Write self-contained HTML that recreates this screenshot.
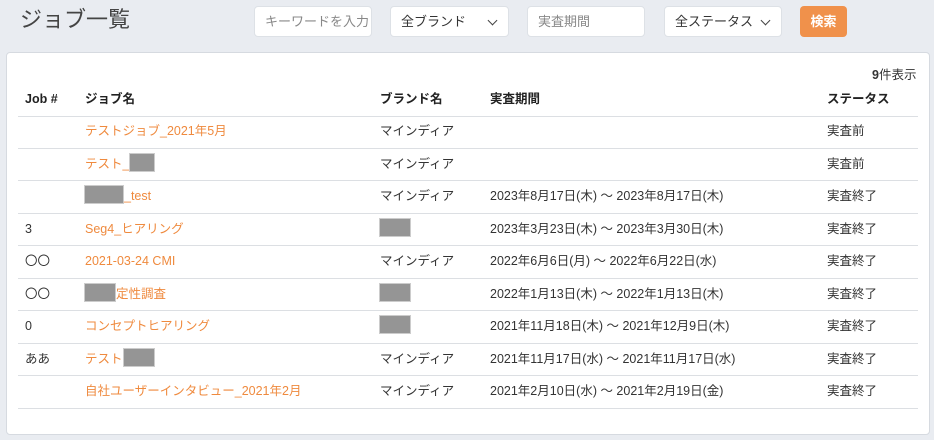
<!DOCTYPE html>
<html><head><meta charset="utf-8"><style>
*{box-sizing:border-box;margin:0;padding:0}
body{width:934px;height:440px;background:#e9ecf1;font-family:"Liberation Sans","Noto Sans CJK JP",sans-serif;color:#333;position:relative;overflow:hidden;font-size:12.5px}
.abs{position:absolute}
h1{position:absolute;left:20px;top:5px;font-size:22px;line-height:30px;font-weight:normal;color:#444}
.inp{position:absolute;top:6px;height:31px;background:#fff;border:1px solid #dde1e6;border-radius:4px;font-size:13px;line-height:29px;color:#888;padding:0 10px;white-space:nowrap;overflow:hidden}
.sel{color:#333}
.chev{position:absolute;right:12px;top:10px;width:7px;height:7px;border-right:1.5px solid #444;border-bottom:1.5px solid #444;transform:rotate(45deg)}
.btn{position:absolute;left:800px;top:6px;width:47px;height:31px;background:#f0914b;border-radius:4px;color:#fff;font-size:13px;font-weight:bold;text-align:center;line-height:31px}
.card{position:absolute;left:6px;top:52px;width:924px;height:383px;background:#fff;border:1px solid #d6dae0;border-radius:4px}
.row{position:absolute;left:18px;width:900px;border-bottom:1px solid #dcdfe3;height:32.5px}
.row span{position:absolute;top:0;line-height:31px;height:31px;white-space:nowrap}
.o{color:#ef8a3e}
.r{display:inline-block;background:#959595;height:19px;vertical-align:-4px;border:1px solid #ccc}
.h span{font-weight:bold;color:#222}
</style></head><body>
<h1>ジョブ一覧</h1>
<div class="inp" style="left:254px;width:118px">キーワードを入力</div>
<div class="inp sel" style="left:390px;width:119px">全ブランド<div class="chev"></div></div>
<div class="inp" style="left:527px;width:118px">実査期間</div>
<div class="inp sel" style="left:664px;width:118px">全ステータス<div class="chev"></div></div>
<div class="btn">検索</div>
<div class="card"></div>
<div class="abs" style="left:872px;top:66px;line-height:18px;font-size:12.5px;color:#333"><b>9</b>件表示</div>
<div class="row h" style="top:84px;height:33px"><span style="left:7px">Job #</span><span style="left:67px">ジョブ名</span><span style="left:362px">ブランド名</span><span style="left:472px">実査期間</span><span style="left:809px">ステータス</span></div>
<div class="row" style="top:116px"><span class="o" style="left:67px">テストジョブ_2021年5月</span><span style="left:362px">マインディア</span><span style="left:809px">実査前</span></div>
<div class="row" style="top:148.5px"><span class="o" style="left:67px">テスト_<i class="r" style="width:26px"></i></span><span style="left:362px">マインディア</span><span style="left:809px">実査前</span></div>
<div class="row" style="top:181px"><span class="o" style="left:66px"><i class="r" style="width:40px"></i>_test</span><span style="left:362px">マインディア</span><span style="left:472px">2023年8月17日(木) 〜 2023年8月17日(木)</span><span style="left:809px">実査終了</span></div>
<div class="row" style="top:213.5px"><span style="left:7px">3</span><span class="o" style="left:67px">Seg4_ヒアリング</span><span style="left:361px"><i class="r" style="width:32px"></i></span><span style="left:472px">2023年3月23日(木) 〜 2023年3月30日(木)</span><span style="left:809px">実査終了</span></div>
<div class="row" style="top:246px"><span style="left:7px">〇〇</span><span class="o" style="left:67px">2021-03-24 CMI</span><span style="left:362px">マインディア</span><span style="left:472px">2022年6月6日(月) 〜 2022年6月22日(水)</span><span style="left:809px">実査終了</span></div>
<div class="row" style="top:278.5px"><span style="left:7px">〇〇</span><span class="o" style="left:66px"><i class="r" style="width:32px"></i>定性調査</span><span style="left:361px"><i class="r" style="width:32px"></i></span><span style="left:472px">2022年1月13日(木) 〜 2022年1月13日(木)</span><span style="left:809px">実査終了</span></div>
<div class="row" style="top:311px"><span style="left:7px">0</span><span class="o" style="left:67px">コンセプトヒアリング</span><span style="left:361px"><i class="r" style="width:32px"></i></span><span style="left:472px">2021年11月18日(木) 〜 2021年12月9日(木)</span><span style="left:809px">実査終了</span></div>
<div class="row" style="top:343.5px"><span style="left:7px">ああ</span><span class="o" style="left:67px">テスト<i class="r" style="width:32px"></i></span><span style="left:362px">マインディア</span><span style="left:472px">2021年11月17日(水) 〜 2021年11月17日(水)</span><span style="left:809px">実査終了</span></div>
<div class="row" style="top:376px"><span class="o" style="left:67px">自社ユーザーインタビュー_2021年2月</span><span style="left:362px">マインディア</span><span style="left:472px">2021年2月10日(水) 〜 2021年2月19日(金)</span><span style="left:809px">実査終了</span></div>
</body></html>
